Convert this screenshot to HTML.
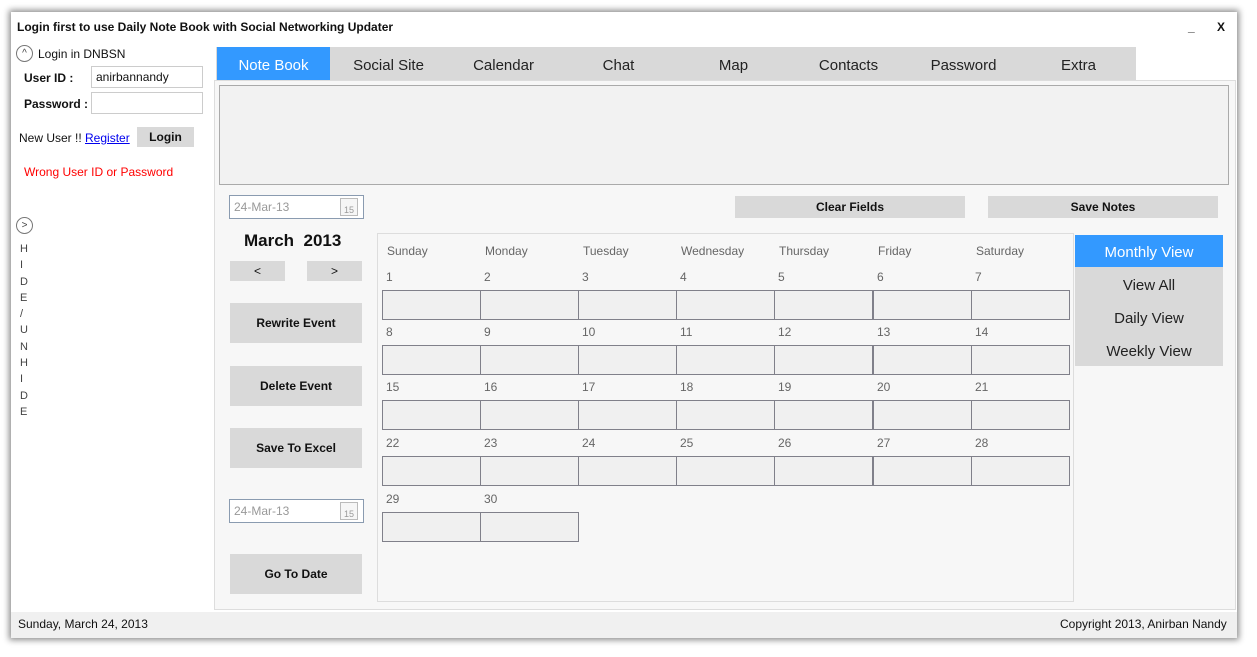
<!DOCTYPE html>
<html><head><meta charset="utf-8"><style>
*{margin:0;padding:0;box-sizing:border-box}
body{width:1257px;height:657px;background:#fff;font-family:"Liberation Sans",sans-serif;font-size:12px;color:#111;position:relative;overflow:hidden}
.a{position:absolute}
.win{left:11px;top:12px;width:1226px;height:626px;background:#fff;box-shadow:0 0 6px 2px rgba(0,0,0,.45)}
.btn{position:absolute;background:#d9d9d9;font-weight:bold;font-size:12px;display:flex;align-items:center;justify-content:center}
.tab{position:absolute;top:47px;height:33px;width:115px;font-size:15px;display:flex;align-items:center;justify-content:center;color:#222;padding-top:3px}
.inp{position:absolute;background:#fff;border:1px solid #ccc}
.dh{position:absolute;top:244px;font-size:12px;color:#666}
.num{position:absolute;font-size:12px;color:#666}
.box{position:absolute;width:99px;height:30px;background:#f0f0f0;border:1px solid #80808a}
.vw{position:absolute;left:1075px;width:148px;height:33px;font-size:15px;display:flex;align-items:center;justify-content:center;color:#222;padding-top:2px}
.circ{position:absolute;width:17px;height:17px;border:1px solid #777;border-radius:50%;font-size:10px;display:flex;align-items:center;justify-content:center;color:#444}
.date{position:absolute;width:135px;height:24px;border:1px solid #8a9bb0;background:#fff;color:#999;font-size:12px;padding:4px 4px}
.cal{position:absolute;right:5px;top:2px;width:18px;height:18px;border:1px solid #bbb;font-size:9px;color:#999;text-align:center;padding-top:6px;background:#f6f6f6}
</style></head><body>
<div class="a win"></div>
<div class="a" style="left:17px;top:20px;font-weight:bold;font-size:12px">Login first to use Daily Note Book with Social Networking Updater</div>
<div class="a" style="left:1188px;top:20px;font-weight:bold">_</div>
<div class="a" style="left:1217px;top:20px;font-weight:bold">X</div>

<div class="circ" style="left:16px;top:45px">^</div>
<div class="a" style="left:38px;top:47px">Login in DNBSN</div>
<div class="a" style="left:24px;top:71px;font-weight:bold">User ID :</div>
<div class="inp" style="left:91px;top:66px;width:112px;height:22px;padding:3px 4px">anirbannandy</div>
<div class="a" style="left:24px;top:97px;font-weight:bold">Password :</div>
<div class="inp" style="left:91px;top:92px;width:112px;height:22px"></div>
<div class="a" style="left:19px;top:131px">New User !! <span style="color:#00e;text-decoration:underline">Register</span></div>
<div class="btn" style="left:137px;top:127px;width:57px;height:20px">Login</div>
<div class="a" style="left:24px;top:165px;color:#f00">Wrong User ID or Password</div>
<div class="circ" style="left:16px;top:217px">&gt;</div>
<div class="a" style="left:20px;top:241px;font-size:11px;line-height:16.3px;color:#444;width:10px">H<br>I<br>D<br>E<br>/<br>U<br>N<br>H<br>I<br>D<br>E</div>

<div class="a" style="left:216px;top:47px;width:920px;height:33px;background:#d9d9d9"></div>
<div class="a" style="left:214px;top:80px;width:1022px;height:530px;background:#f7f7f7;border:1px solid #ddd"></div>
<div class="tab" style="left:217px;width:113px;background:#3399ff;color:#fff">Note Book</div>
<div class="tab" style="left:331px">Social Site</div>
<div class="tab" style="left:446px">Calendar</div>
<div class="tab" style="left:561px">Chat</div>
<div class="tab" style="left:676px">Map</div>
<div class="tab" style="left:791px">Contacts</div>
<div class="tab" style="left:906px">Password</div>
<div class="tab" style="left:1021px">Extra</div>

<div class="a" style="left:219px;top:85px;width:1010px;height:100px;background:#f2f2f2;border:1px solid #aaa"></div>
<div class="date" style="left:229px;top:195px">24-Mar-13<div class="cal">15</div></div>
<div class="btn" style="left:735px;top:196px;width:230px;height:22px">Clear Fields</div>
<div class="btn" style="left:988px;top:196px;width:230px;height:22px">Save Notes</div>

<div class="a" style="left:244px;top:231px;font-weight:bold;font-size:17px">March&nbsp; 2013</div>
<div class="btn" style="left:230px;top:261px;width:55px;height:20px;font-weight:normal">&lt;</div>
<div class="btn" style="left:307px;top:261px;width:55px;height:20px;font-weight:normal">&gt;</div>
<div class="btn" style="left:230px;top:303px;width:132px;height:40px">Rewrite Event</div>
<div class="btn" style="left:230px;top:366px;width:132px;height:40px">Delete Event</div>
<div class="btn" style="left:230px;top:428px;width:132px;height:40px">Save To Excel</div>
<div class="date" style="left:229px;top:499px">24-Mar-13<div class="cal">15</div></div>
<div class="btn" style="left:230px;top:554px;width:132px;height:40px">Go To Date</div>

<div class="a" style="left:377px;top:233px;width:697px;height:369px;background:#f7f7f7;border:1px solid #ddd"></div>
<div class="dh" style="left:387px">Sunday</div>
<div class="dh" style="left:485px">Monday</div>
<div class="dh" style="left:583px">Tuesday</div>
<div class="dh" style="left:681px">Wednesday</div>
<div class="dh" style="left:779px">Thursday</div>
<div class="dh" style="left:878px">Friday</div>
<div class="dh" style="left:976px">Saturday</div>
<div id="g"></div>
<script>
var xs=[382,480,578,676,774,873,971],ys=[290,345,400,456,512],h='',d=1;
for(var r=0;r<5;r++)for(var c=0;c<7;c++){if(d>30)break;
h+='<div class="num" style="left:'+(xs[c]+4)+'px;top:'+(ys[r]-20)+'px">'+d+'</div><div class="box" style="left:'+xs[c]+'px;top:'+ys[r]+'px"></div>';d++;}
document.getElementById('g').innerHTML=h;
</script>

<div class="vw" style="top:235px;height:32px;background:#3399ff;color:#fff">Monthly View</div>
<div class="a" style="left:1075px;top:267px;width:148px;height:99px;background:#d9d9d9"></div>
<div class="vw" style="top:268px">View All</div>
<div class="vw" style="top:301px">Daily View</div>
<div class="vw" style="top:334px">Weekly View</div>

<div class="a" style="left:11px;top:612px;width:1226px;height:26px;background:#f0f0f0"></div>
<div class="a" style="left:18px;top:617px">Sunday, March 24, 2013</div>
<div class="a" style="left:1060px;top:617px">Copyright 2013, Anirban Nandy</div>
</body></html>
